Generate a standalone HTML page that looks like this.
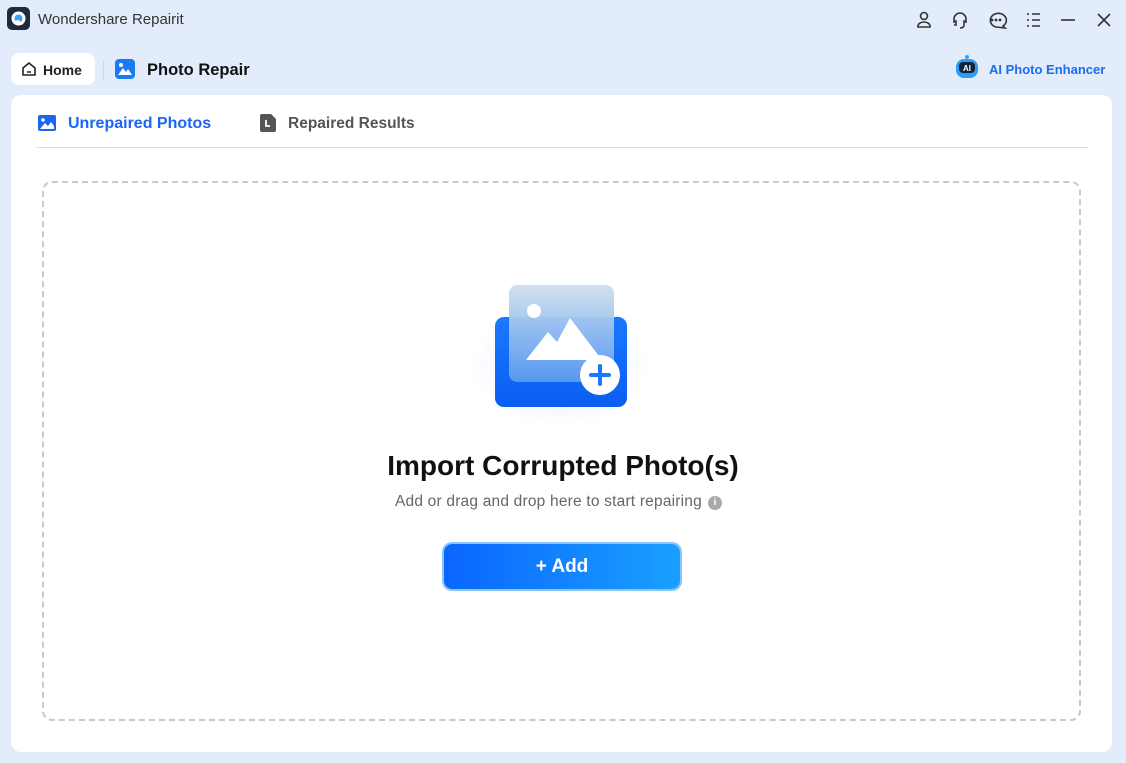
<!DOCTYPE html>
<html><head><meta charset="utf-8"><style>
*{margin:0;padding:0;box-sizing:border-box}
body{width:1126px;height:763px;background:#e3ecfa;font-family:"Liberation Sans",sans-serif;position:relative;overflow:hidden;color:#222}
.abs{position:absolute}
.title{left:38px;top:11px;font-size:15px;color:#333}
.logo{left:7px;top:7px;width:23px;height:23px;background:#1d2b3c;border-radius:5px}
.home{left:11px;top:53px;width:84px;height:32px;background:#fff;border-radius:8px;font-size:14px;font-weight:bold;color:#222}
.main{left:11px;top:95px;width:1101px;height:657px;background:#fff;border-radius:10px}
.tab{font-size:16px;font-weight:bold}
.drop{left:42px;top:181px;width:1039px;height:540px;border:2px dashed #c9c9c9;border-radius:10px}
.btn{left:444px;top:544px;width:236px;height:45px;border-radius:8px;background:linear-gradient(90deg,#0a66ff,#1aa0ff);color:#fff;font-size:19px;font-weight:bold;text-align:center;line-height:45px;box-shadow:0 0 0 2px #8cc4ff}
</style></head><body>
<div class="abs logo"><svg width="23" height="23" viewBox="0 0 23 23"><circle cx="11.5" cy="11.5" r="7" fill="#fff"/><circle cx="11.5" cy="11.5" r="4" fill="#3aa0f0"/><path d="M6 14 L16 18 L12 13Z" fill="#fff"/></svg></div>
<div class="abs title">Wondershare Repairit</div>
<svg class="abs" style="left:914px;top:10px" width="200" height="20" viewBox="0 0 200 20" fill="none" stroke="#333" stroke-width="1.6">
<circle cx="10" cy="6" r="3.5"/><path d="M4 17 v-1 a6 4 0 0 1 12 0 v1z"/>
<path d="M40 13 v-4 a6 6 0 0 1 12 0 v4 M40 11h2v4h-2 M52 11h-2v4 M50 15 q0 3 -4 3"/>
<path d="M82 17 a8 7 0 1 1 7 -1 l2 2z"/><circle cx="78" cy="10" r=".6" fill="#333"/><circle cx="82" cy="10" r=".6" fill="#333"/><circle cx="86" cy="10" r=".6" fill="#333"/>
<path d="M113 4h2 M113 10h2 M113 16h2 M118 4h8 M118 10h8 M118 16h8"/>
<path d="M147 10h14"/><path d="M184 4l12 12 M196 4l-12 12"/>
</svg>
<div class="abs home"><svg class="abs" style="left:10px;top:8px" width="16" height="16" viewBox="0 0 16 16" fill="none" stroke="#222" stroke-width="1.6"><path d="M2 7 L8 2 L14 7 V14 H2Z M6 11h4"/></svg><span class="abs" style="left:32px;top:9px">Home</span></div>
<div class="abs" style="left:103px;top:60px;width:1px;height:20px;background:#cfd8e6"></div>
<svg class="abs" style="left:115px;top:59px" width="20" height="20" viewBox="0 0 20 20"><rect width="20" height="20" rx="4" fill="#1a7cf5"/><circle cx="6" cy="6" r="2" fill="#fff"/><path d="M3 16 L8 9 L11 13 L13 10 L17 16Z" fill="#fff"/></svg>
<div class="abs" style="left:147px;top:61px;font-size:16.5px;font-weight:bold;color:#111">Photo Repair</div>
<svg class="abs" style="left:955px;top:54px" width="24" height="26" viewBox="0 0 24 26"><circle cx="12" cy="3" r="2" fill="#3aa0f0"/><rect x="1" y="5" width="22" height="19" rx="8" fill="#2a9df4"/><rect x="4" y="8" width="16" height="11" rx="4" fill="#10243a"/><text x="12" y="17" font-size="8" font-weight="bold" fill="#fff" text-anchor="middle" font-family="Liberation Sans">AI</text></svg>
<div class="abs" style="left:989px;top:62px;font-size:13px;font-weight:bold;color:#1a6cf0">AI Photo Enhancer</div>
<div class="abs main"></div>
<svg class="abs" style="left:38px;top:115px" width="18" height="16" viewBox="0 0 18 16"><rect width="18" height="16" rx="2" fill="#1a66f0"/><circle cx="5" cy="5" r="1.8" fill="#fff"/><path d="M2 14 L7 8 L10 11 L13 7 L16 11 V14Z" fill="#fff"/></svg>
<div class="abs tab" style="left:68px;top:115px;color:#1a66f0">Unrepaired Photos</div>
<svg class="abs" style="left:260px;top:114px" width="16" height="18" viewBox="0 0 16 18"><path d="M0 2 a2 2 0 0 1 2-2 h9 l5 5 v11 a2 2 0 0 1 -2 2 h-12 a2 2 0 0 1 -2-2z" fill="#555"/><path d="M6 6 v6 h4" stroke="#fff" stroke-width="1.8" fill="none"/></svg>
<div class="abs tab" style="left:288px;top:115px;color:#555;font-size:15.5px">Repaired Results</div>
<div class="abs" style="left:36px;top:147px;width:1052px;height:1px;background:#dedede"></div>
<div class="abs drop"></div>
<div class="abs" style="left:470px;top:300px;width:180px;height:130px;border-radius:40px;background:radial-gradient(ellipse,rgba(120,150,255,.18),rgba(255,255,255,0) 70%)"></div>
<svg class="abs" style="left:490px;top:280px" width="145" height="130" viewBox="0 0 145 130">
<defs><linearGradient id="b" x1="0" y1="0" x2="0" y2="1"><stop offset="0" stop-color="#1a78ff"/><stop offset="1" stop-color="#0a5ef0"/></linearGradient>
<linearGradient id="g" x1="0" y1="0" x2="0" y2="1"><stop offset="0" stop-color="#cfe0ee"/><stop offset="1" stop-color="#5b9af0"/></linearGradient></defs>
<rect x="5" y="37" width="132" height="90" rx="9" fill="url(#b)"/>
<rect x="19" y="5" width="105" height="97" rx="8" fill="url(#g)" opacity=".95"/>
<circle cx="44" cy="31" r="7" fill="#fff"/>
<path d="M36 80 L58 52 L67 62 L80 38 L112 80Z" fill="#fff"/>
<circle cx="110" cy="95" r="20" fill="#fff"/>
<path d="M110 86 v18 M101 95 h18" stroke="#1a78ff" stroke-width="4" stroke-linecap="round"/>
</svg>
<div class="abs" style="left:0;width:1126px;top:450px;text-align:center;font-size:28px;font-weight:bold;color:#111">Import Corrupted Photo(s)</div>
<div class="abs" style="left:395px;top:493px;font-size:15.5px;color:#666;letter-spacing:0.2px">Add or drag and drop here to start repairing</div>
<div class="abs" style="left:708px;top:496px;width:14px;height:14px;border-radius:50%;background:#aaa;color:#fff;font-size:10px;font-weight:bold;text-align:center;line-height:14px">i</div>
<div class="abs btn">+ Add</div>
</body></html>
